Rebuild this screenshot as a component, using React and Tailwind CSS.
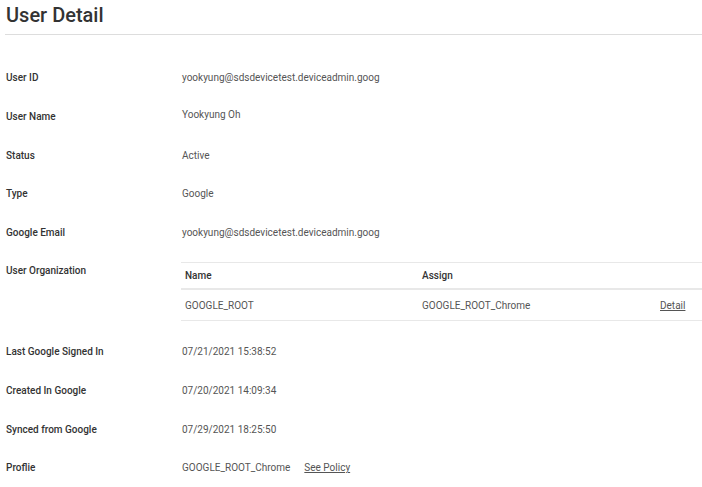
import React from "react";

const rowsTop = [
  { label: "User ID", value: "yookyung@sdsdevicetest.deviceadmin.goog" },
  { label: "User Name", value: "Yookyung Oh", shift: true },
  { label: "Status", value: "Active" },
  { label: "Type", value: "Google" },
  { label: "Google Email", value: "yookyung@sdsdevicetest.deviceadmin.goog" },
];

const rowsBottom = [
  { label: "Last Google Signed In", value: "07/21/2021 15:38:52" },
  { label: "Created In Google", value: "07/20/2021 14:09:34" },
  { label: "Synced from Google", value: "07/29/2021 18:25:50" },
];

const Row = ({ label, children, shift }) => (
  <div className="flex h-[38.7px] items-center">
    <div className="w-[176px] shrink-0 text-[10px] font-medium leading-[13px] text-[#333]">{label}</div>
    <div className={`text-[10px] leading-[13px] text-[#555] ${shift ? "-mt-[3px]" : ""}`}>{children}</div>
  </div>
);

const App = () => {
  return (
    <div className="min-h-screen bg-white font-['Roboto',sans-serif]">
      <div className="pl-[6px] pt-[3px]">
        <h1 className="text-[20px] font-medium leading-[25px] text-[#333]">User Detail</h1>
      </div>
      <div className="ml-[5px] mt-[6px] h-px bg-[#ddd]" />

      <div className="mt-[23.4px] pl-[6px]">
        {rowsTop.map((r) => (
          <Row key={r.label} label={r.label} shift={r.shift}>
            {r.value}
          </Row>
        ))}

        {/* organization table */}
        <div className="flex">
          <div className="w-[175px] shrink-0 pt-[12px] text-[10px] font-medium leading-[13px] text-[#333]">
            User Organization
          </div>
          <div className="mt-[10.5px] flex-1 text-[10px] leading-[13px]">
            <div className="grid h-[28px] grid-cols-[237px_238px_1fr] items-center border-t border-b-2 border-[#e8e8e8] font-medium text-[#333]">
              <div className="pl-[4px]">Name</div>
              <div className="pl-[4px]">Assign</div>
              <div />
            </div>
            <div className="grid h-[31px] grid-cols-[237px_238px_1fr] items-center border-b border-[#e8e8e8] text-[#555]">
              <div className="pl-[4px]">GOOGLE_ROOT</div>
              <div className="pl-[4px]">GOOGLE_ROOT_Chrome</div>
              <div className="pl-[4px]">
                <span className="underline">Detail</span>
              </div>
            </div>
          </div>
        </div>

        <div className="mt-[11px]">
          {rowsBottom.map((r) => (
            <Row key={r.label} label={r.label}>
              {r.value}
            </Row>
          ))}
          <Row label="Proflie">
            <span>GOOGLE_ROOT_Chrome</span>
            <span className="ml-[14px] underline">See Policy</span>
          </Row>
        </div>
      </div>
    </div>
  );
};

export default App;
